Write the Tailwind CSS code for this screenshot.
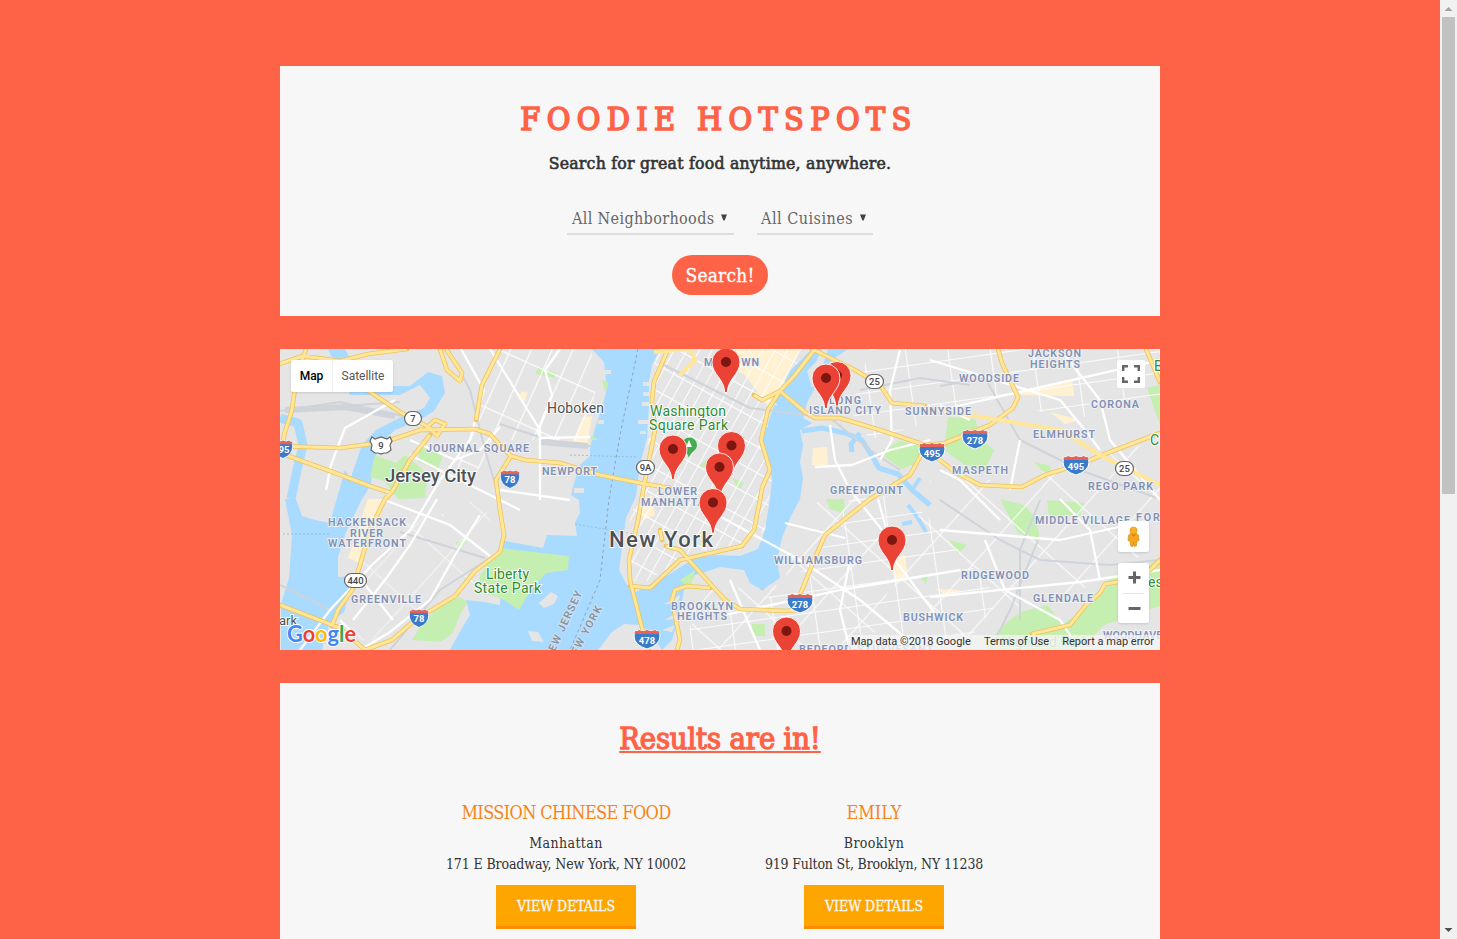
<!DOCTYPE html>
<html lang="en">
<head>
<meta charset="utf-8">
<title>Foodie Hotspots</title>
<script src="https://cdn.jsdelivr.net/npm/@tailwindcss/browser@4"></script>
</head>
<body class="flex h-screen overflow-hidden bg-[#ff6347] font-['Roboto_Slab','DejaVu_Serif_Condensed','DejaVu_Serif',serif] text-[#333]">
<main class="flex h-full flex-1 flex-col items-center gap-[33px] overflow-hidden pt-[66px]">

  <header class="flex h-[250px] w-[880px] shrink-0 flex-col items-center bg-[#f7f7f7] pt-8">
    <h1 class="h-[42px] pr-[2px] text-[32px] leading-[42px] tracking-[6.4px] whitespace-nowrap text-[#ff6347] [-webkit-text-stroke:1.7px_#ff6347]"><span>FOODIE HOTSPOTS</span></h1>
    <p class="mt-3 h-[22px] text-[17.5px] leading-[22px] tracking-[0.23px] whitespace-nowrap [-webkit-text-stroke:0.6px_#333]"><span>Search for great food anytime, anywhere.</span></p>
    <div class="mt-[29px] flex gap-[23px] text-base text-[#666]">
      <div class="flex h-8 w-[167px] items-end justify-between border-b-2 border-[#ddd] pr-[7px] pb-[2px] pl-[5px] whitespace-nowrap"><span class="tracking-[0.36px]">All Neighborhoods</span><svg class="mb-[10px] h-[7px] w-[6px]" viewBox="0 0 6 7"><path d="M0 0.500h6L3.600 6.500H2.400z" fill="#444"/></svg></div>
      <div class="flex h-8 w-[116px] items-end justify-between border-b-2 border-[#ddd] pr-[7px] pb-[2px] pl-1 whitespace-nowrap"><span class="tracking-[0.5px]">All Cuisines</span><svg class="mb-[10px] h-[7px] w-[6px]" viewBox="0 0 6 7"><path d="M0 0.500h6L3.600 6.500H2.400z" fill="#444"/></svg></div>
    </div>
    <button class="mt-5 h-10 w-24 rounded-[20px] bg-[#ff6347] pt-px text-[19px] tracking-[0.2px] whitespace-nowrap text-white [-webkit-text-stroke:0.3px_#fff]"><span>Search!</span></button>
  </header>

  <section class="relative h-[301px] w-[880px] shrink-0 overflow-hidden bg-[#e5e5e5] font-[Roboto,sans-serif]">
    <svg class="block" width="880" height="301" viewBox="280 349 880 301">
      <defs>
        <pattern id="g1" width="11" height="23" patternUnits="userSpaceOnUse" patternTransform="rotate(29)"><path d="M0 0V23M0 0H11" stroke="#fff" stroke-width="1.800" fill="none"/></pattern>
        <pattern id="g4" width="19" height="58" patternUnits="userSpaceOnUse" patternTransform="rotate(24)"><path d="M0 0V58M0 0H19" stroke="#fff" stroke-width="2.400" fill="none"/></pattern>
        <pattern id="g2" width="42" height="21" patternUnits="userSpaceOnUse" patternTransform="translate(8 4) rotate(-8)"><path d="M0 0V21M0 0H42" stroke="#fff" stroke-width="2.200" fill="none"/></pattern>
        <pattern id="g3" width="44" height="58" patternUnits="userSpaceOnUse" patternTransform="rotate(42)"><path d="M0 0V58M0 0H44" stroke="#fff" stroke-width="2.400" fill="none"/></pattern>
        <g id="pin"><path d="M-1.300 0C-1.600-14-14-18-14-30.500A14 14 0 0 1 14-30.500C14-18 1.600-14 1.300 0Z" fill="#ea4335" stroke="#fff" stroke-width=".9"/><circle cy="-30.500" r="5" fill="#7b1610"/></g>
        <g id="sh"><path d="M-12-8Q-10-7-8-9Q-4-7 0-9Q4-7 8-9Q10-7 12-8L13-3Q13 6 0 10Q-13 6-13-3Z" fill="#3a7ac8" stroke="#fff" stroke-width="1"/><path d="M-12-8Q-10-7-8-9Q-4-7 0-9Q4-7 8-9Q10-7 12-8L12.500-5H-12.500Z" fill="#e36359"/></g>
      </defs>
      <rect x="280" y="349" width="880" height="301" fill="#e5e5e5"/>
      <!-- water -->
      <g fill="#a9daff">
        <path d="M592 349L604 362L607 388L602 408L596 425L590 448L590 456L580 465L575 480L571 495L579 500L580 513L575 522L577 536L547 535L543 548L500 540L500 605L484 602L466 600L470 615L462 628L450 650H598L612 632L624 624L640 625L652 634L662 650L672 640L680 612L684 590L695 575L720 567L744 570L750 583L762 590L780 578L777 560L782 538L790 518L800 499L803 478L800 462L803 445L800 430L812 423L803 418L808 400L814 390L818 375L832 360L848 349H812L790 371L778 395L769 420L762 442L765 456L772 478L770 499L765 530L758 549L740 556L715 555L695 558L668 575L650 585L636 592L627 585L619 570L623 540L626 518L636 496L640 465L647 438L649 405L649 380L652 365L660 349Z"/>
        <path d="M285 499L292 535L289 578L281 604V650H322L330 622L344 612L350 589L355 576L338 577L338 557L346 532L362 499L345 470L335 505L330 523L315 520L302 516L296 499Z"/>
        <path d="M328 349H345L352 362L392 375L385 386H410L428 372L442 376L445 393L434 411L418 421L395 430L382 442L373 462L371 485L362 499L348 500L352 474L362 445L376 430L405 415L424 408L430 398L420 385L400 395H350Z"/>
      </g>
      <g fill="none" stroke="#a9daff" stroke-linejoin="round">
        <path stroke-width="9" d="M280 418L298 423L303 445L297 470L291 499"/><path stroke-width="5" d="M802 431L822 428L845 433L862 440L872 456L879 468L898 474L912 490L930 505M860 433L851 444L852 452"/><path stroke-width="4" d="M908 505L918 518L926 532M912 522L902 524M912 490L920 478M762 590L764 570L775 555"/>
      </g>
      <path d="M807 371L816 362L822 349H828L821 371L812 388Z" fill="#e5e5e5"/>
      <!-- parks -->
      <g fill="#c5eeb1">
        <path d="M500 548L569 556L568 570L546 573L530 591L519 610L504 600L478 590L480 575Z"/><path d="M441 604L460 597L467 602L460 615L452 634L440 642L412 640L422 624Z"/>
        <path d="M375 455L396 463L405 455L428 474L425 498L398 499L384 481L370 477Z"/><path d="M420 445L443 455L438 470L418 462Z"/><path d="M883 450L900 441L920 446L919 462L902 469L882 455Z"/><path d="M948 417L975 419L982 440L994 450L986 468L965 465L944 450Z"/><path d="M1000 499L1024 505L1036 518L1040 540L1018 533Z"/>
        <path d="M1000 628L1020 612L1048 605L1062 625L1090 605L1100 590L1115 575L1160 560V606L1104 625L1080 650H985Z"/><path d="M1147 388L1160 385V425Z"/><path d="M826 499H844L845 514L830 509ZM538 367L556 373L555 378L536 374ZM602 380L609 383L605 392ZM752 624H765V636H752ZM455 542L467 540L460 550ZM592 436L599 440H590ZM699 466L712 455L718 470ZM732 478L744 483L739 490ZM950 540L967 545L958 554ZM920 577L928 575L926 584ZM1047 500L1084 503L1080 516H1049ZM680 580L695 570L690 590ZM1034 462L1051 466L1048 477Z"/>
      </g>
      <g fill="#fff1d2"><path d="M368 499H386L374 534L359 563L348 558ZM583 417L592 416L588 440L590 446L572 443ZM522 391L528 393L525 401L518 399ZM720 349H800L771 410L745 375L715 360ZM813 448L827 447L828 467L812 465ZM995 397L1072 380L1074 396L1015 395ZM1050 412L1080 420L1065 424ZM890 560L905 555L908 578L895 580ZM935 589L960 590L950 597ZM640 500L652 495L655 515L643 520Z"/></g>
      <!-- street grids -->
      <path fill="url(#g1)" d="M660 349H812L790 371L762 442L772 478L765 530L740 550L700 550L640 585L627 575L630 520L642 480L650 430L652 370Z"/>
      <path fill="url(#g4)" opacity=".9" d="M500 349H590L600 375L582 440H500L440 520L470 430Z"/>
      <path fill="url(#g2)" opacity=".85" d="M760 600L790 590L850 499L905 495L950 540L1000 600L960 650H690L690 610ZM870 349H1160V400L1070 420L1000 400L870 440L850 410Z"/>
      <path fill="url(#g3)" opacity=".8" d="M790 520L850 480L900 550L870 650H790L690 650L695 590L785 585ZM930 480L1010 480L1160 440V540L1110 580L1010 610L950 650L890 600Z"/>
      <path fill="url(#g3)" opacity=".5" d="M370 530L480 499L500 540L470 590L400 640H350L360 580Z"/>
      <!-- railways -->
      <g fill="none" stroke="#cfd3da" stroke-width="2"><path d="M280 411L340 402L420 420M300 409L400 402M448 349L470 390L485 450L500 500M500 424L560 444L590 446M280 585L330 610M400 532L485 558M490 558L440 590L390 650M660 363L750 408L830 418L870 450L900 470M860 390L920 378L970 385M940 386L985 378L1020 440L1080 470L1160 499M940 500L1000 540L1040 560L1110 565L1160 560M1038 540L1010 610L990 650M1040 500L1020 550L1020 620"/><path stroke-width="6" d="M285 410L345 407L395 416M540 442L588 446"/></g>
      <g fill="none" stroke="#fff" stroke-width="2.300" stroke-linejoin="round">
        <path d="M461 349L484 390L478 410L470 440L440 480L410 530L372 565L330 610L300 650M395 400L345 428L331 465L326 490M382 499L450 525L490 556M500 427L480 450L455 460L410 440M437 499L410 545L385 580L353 620M480 515L455 555L430 600L390 632L360 650M355 572L393 620M490 349L540 430L540 500M410 455L520 510M340 620L355 635M560 349L545 370L552 395L538 432L540 438L590 437M500 490L570 500"/>
        <path d="M712 512L800 560L860 600L920 650M785 523L845 538M830 425L835 460L850 490L890 540M815 467L852 465L890 450L930 440M900 350L890 390L892 440L880 460M930 360L1060 400L1085 430L1100 450M1060 349L1100 400L1110 440L1160 500M940 410L1160 360M940 405L970 420M940 530L1060 540L1150 520M930 597L1080 582L1160 570M985 540L1005 590L1060 620L1080 650M1060 499L1090 530L1100 580M1000 520L960 480L940 470M1010 490L1020 440M725 615L840 590L960 570M730 580L760 650M850 560L840 610L850 650M878 499L895 560L940 620"/>
      </g>
      <path d="M638 349L621 430L609 499L600 580L570 650" fill="none" stroke="#8ea5b8" stroke-width="1" stroke-dasharray="3 3"/>
      <path d="M570 455L636 457M283 534H330M575 524L640 535" stroke="#92b8d0" stroke-width=".8" stroke-dasharray="2 2"/>
      <g fill="#e5e5e5"><path d="M649 382H643V386H649M649 392H643V396H649M650 402H642V406H650M648 420H638V424H648M646 431H640V434H646M605 370H611V374H605M604 420H598V424H604M578 470H586V474H578M574 488H584V493H574M680 595L664 604L678 604M678 612L665 620L677 619M675 625L662 630L672 632M539 603L551 592L558 596L554 604L544 608ZM528 631L538 632L544 642L532 641Z"/></g>
      <!-- highways -->
      <g id="major" fill="none" stroke="#eec35a" stroke-width="4.600" stroke-linejoin="round" stroke-linecap="round">
        <path id="hw1" d="M276 365L303 356L340 361L368 354L407 349M306 349L296 380L292 410L284 435L282 455M280 446L340 448L385 442L420 430L475 429L490 434L500 445L511 456L525 460L560 463L600 475L640 483L670 488M360 385L400 412L430 428L437 436L445 424L435 420L426 428M280 453L330 471L370 486L391 493M430 435L410 460L392 492L385 499L370 530L360 565L352 590L338 610L332 626M280 605L340 628L365 650M365 650L392 640L415 620L455 596L475 571L500 552L504 535L500 510L496 480L511 456M440 349L447 370L460 381L462 373L446 349M500 349L482 385L476 420M668 349L654 382L652 400L655 430L645 480L638 520L629 560L630 580L640 620L648 650M630 586L650 588L680 560L720 551L742 546L754 530L760 500L762 488L770 470L761 440L768 410L780 391M662 540L660 530M666 546L680 550L725 600L740 609L785 611M677 650L680 640L672 600L675 590L687 586L710 588M815 349L795 375L780 391L762 400L754 395M780 391L805 412L815 418L840 418L880 430L925 445L945 443L990 425L1013 408L1018 397L1002 363L998 349M812 349L855 370L880 385L892 403L925 406M925 448L910 475L870 499L825 535L812 565L800 595L797 610L785 611M930 452L955 472L980 485L1022 487L1045 475L1080 464L1110 452L1160 433M1032 634L1070 625L1086 605L1100 593L1105 584L1130 580L1150 570L1160 560M1146 349L1160 382"/>
      </g>
      <use href="#hw1" fill="none" stroke="#ffe699" stroke-width="3"/>
      <path d="M925 408L1000 420L1060 430L1100 455L1160 485M654 352L690 349L695 360L680 375" fill="none" stroke="#ffe699" stroke-width="4"/>
      <!-- place labels -->
      <g font-family="Roboto, sans-serif" font-size="10.700" font-weight="600" fill="#8090b2" stroke="#f1f2f5" stroke-width="1.800" paint-order="stroke">
        <text x="426" y="452" textLength="103">JOURNAL SQUARE</text><text x="542" y="475" textLength="55">NEWPORT</text><text x="328" y="526" textLength="78">HACKENSACK</text><text x="350" y="537" textLength="33">RIVER</text><text x="328" y="547" textLength="78">WATERFRONT</text><text x="351" y="603" textLength="70">GREENVILLE</text>
        <text x="658" y="495" textLength="39">LOWER</text><text x="641" y="506" textLength="72">MANHATTAN</text><text x="704" y="366" textLength="55">MIDTOWN</text><text x="671" y="610" textLength="62">BROOKLYN</text><text x="677" y="620" textLength="50">HEIGHTS</text><text x="829" y="404" textLength="32">LONG</text><text x="809" y="414" textLength="72">ISLAND CITY</text><text x="905" y="415" textLength="66">SUNNYSIDE</text><text x="959" y="382" textLength="60">WOODSIDE</text><text x="1028" y="357" textLength="53">JACKSON</text><text x="1030" y="368" textLength="50">HEIGHTS</text><text x="1091" y="408" textLength="48">CORONA</text><text x="1033" y="438" textLength="62">ELMHURST</text><text x="952" y="474" textLength="56">MASPETH</text><text x="1088" y="490" textLength="65">REGO PARK</text><text x="830" y="494" textLength="73">GREENPOINT</text><text x="1035" y="524" textLength="95">MIDDLE VILLAGE</text><text x="1136" y="521" textLength="62">FOREST H</text><text x="774" y="564" textLength="88">WILLIAMSBURG</text><text x="961" y="579" textLength="68">RIDGEWOOD</text><text x="1033" y="602" textLength="60">GLENDALE</text><text x="903" y="621" textLength="60">BUSHWICK</text><text x="799" y="653" textLength="134">BEDFORD-STUYVESANT</text><text x="1103" y="639" textLength="67">WOODHAVEN</text>
        <g fill="#8993a1" stroke="#cfe3f2"><text transform="translate(551 660) rotate(-65)" textLength="74">NEW JERSEY</text><text transform="translate(573 663) rotate(-62)" textLength="62">NEW YORK</text></g>
      </g>
      <g font-family="Roboto, sans-serif" stroke="#fff" stroke-width="1.800" paint-order="stroke" fill="#4d5156">
        <text x="385" y="482" font-size="18.500" font-weight="500" textLength="91">Jersey City</text><text x="609" y="547" font-size="22" font-weight="500" textLength="104">New York</text><text x="547" y="413" font-size="14" textLength="57">Hoboken</text><text x="279" y="625" font-size="13">ark</text>
        <g fill="#2e8b32" font-size="14"><text x="650" y="416" textLength="76">Washington</text><text x="649" y="430" textLength="79">Square Park</text><text x="486" y="579" textLength="43">Liberty</text><text x="474" y="593" textLength="67">State Park</text><text x="1154" y="371">Be</text><text x="1150" y="445">Citi</text><text x="1148" y="587">est</text><text x="1001" y="647" opacity=".5" textLength="88">Highland Park</text></g>
      </g>
      <!-- road shields -->
      <g font-family="Roboto, sans-serif" font-size="9.500" font-weight="700" text-anchor="middle" fill="#fff">
        <use href="#sh" transform="translate(283 449) scale(.75 .95)"/><text x="284" y="453">95</text><use href="#sh" transform="translate(510 479) scale(.75 .95)"/><text x="510" y="483">78</text><use href="#sh" transform="translate(419 618) scale(.75 .95)"/><text x="419" y="622">78</text><use href="#sh" x="647" y="639"/><text x="647" y="644">478</text><use href="#sh" x="800" y="603"/><text x="800" y="608">278</text><use href="#sh" x="932" y="452"/><text x="932" y="457">495</text><use href="#sh" x="975" y="439"/><text x="975" y="444">278</text><use href="#sh" x="1076" y="465"/><text x="1076" y="470">495</text>
      </g>
      <g fill="#fff" stroke="#656565" stroke-width="1.200"><rect x="404.500" y="411.500" width="17" height="14" rx="7"/><path d="M372 437L375 439L381 437L387 439L390 437L392 441L390 445L391 450L387 453H384L381 454L378 453H375L371 450L372 445L370 441Z"/><rect x="344.500" y="573.500" width="22" height="14" rx="7"/><rect x="636.500" y="460.500" width="18" height="14" rx="7"/><rect x="865.500" y="374.500" width="18" height="14" rx="7"/><rect x="1115.500" y="461.500" width="18" height="14" rx="7"/></g>
      <g font-family="Roboto, sans-serif" font-size="9.500" font-weight="500" text-anchor="middle" fill="#444"><text x="413" y="422">7</text><text x="381" y="449">9</text><text x="355.500" y="584">440</text><text x="645.500" y="471">9A</text><text x="874.500" y="385">25</text><text x="1124.500" y="472">25</text></g>
      <path d="M689 458C688 452 682 451 682 445A7.500 7.500 0 0 1 697 445C697 451 690 452 689 458Z" fill="#43ad50"/><path d="M689 440L692 447H686Z" fill="#fff"/>
      <!-- markers -->
      <use href="#pin" x="726" y="392.500"/><use href="#pin" x="837" y="406"/><use href="#pin" x="826" y="408.500"/><use href="#pin" x="731.500" y="476"/><use href="#pin" x="673" y="479.500"/><use href="#pin" x="719.500" y="497.500"/><use href="#pin" x="713" y="533"/><use href="#pin" x="892" y="570.500"/><use href="#pin" x="786.500" y="661.500"/>
      <g font-family="Lato, sans-serif" font-size="23" stroke="#fff" stroke-width="2" paint-order="stroke"><text x="287" y="642" textLength="69" lengthAdjust="spacingAndGlyphs" font-weight="700"><tspan fill="#4285f4">G</tspan><tspan fill="#ea4335">o</tspan><tspan fill="#fbbc05">o</tspan><tspan fill="#4285f4">g</tspan><tspan fill="#34a853">l</tspan><tspan fill="#ea4335">e</tspan></text></g>
    </svg>
    <div class="absolute top-[11px] left-[11px] flex h-8 w-[102px] rounded-xs bg-white text-xs leading-8 shadow-sm"><span class="w-[42px] border-r border-[#eee] text-center font-medium text-black">Map</span><span class="flex-1 text-center text-[#565656]">Satellite</span></div>
    <div class="absolute top-[11px] left-[837px] flex size-[28px] items-center justify-center rounded-xs bg-white"><svg width="18" height="18" fill="none" stroke="#666" stroke-width="2.400"><path d="M1.200 6V1.200H6M12 1.200h4.800V6M16.800 12v4.800H12M6 16.800H1.200V12"/></svg></div>
    <div class="absolute top-[172px] left-[838px] flex size-[31px] items-center justify-center rounded-xs bg-white shadow-sm"><svg width="13" height="22" viewBox="0 0 14 24"><path d="M4 8L1.500 10L1 16H3L4 22H6.500L7 18L7.500 22H10L11 16H13L12.500 10L10 8Z" fill="#f5a71b" stroke="#c98b2a" stroke-width=".7"/><circle cx="7" cy="5" r="3.900" fill="#f9b122" stroke="#d89525" stroke-width=".7"/><path d="M4.500 9H9.500L7 12Z" fill="#e57b20"/></svg></div>
    <div class="absolute top-[214px] left-[838px] flex h-[60px] w-[31px] flex-col items-center rounded-xs bg-white shadow-sm"><svg width="31" height="60"><path d="M10.500 14.500h12M16.500 8.500v12M10.500 45.500h12" stroke="#666" stroke-width="3"/><path d="M5 30.500h21" stroke="#e6e6e6"/></svg></div>
    <div class="absolute right-0 bottom-0 flex h-[15px] w-[312px] justify-between bg-[#f5f5f5]/75 pr-[6px] pl-[3px] text-[11px] leading-[14px] whitespace-nowrap text-[#333]"><span>Map data ©2018 Google</span><span>Terms of Use</span><span>Report a map error</span></div>
  </section>

  <section class="flex h-[300px] w-[880px] shrink-0 flex-col items-center bg-[#f7f7f7] pt-[35px]">
    <h2 class="h-11 text-[30.5px] leading-[42px] tracking-[-0.1px] whitespace-nowrap text-[#ff6347] underline decoration-2 underline-offset-[2px] [-webkit-text-stroke:1.3px_#ff6347]"><span>Results are in!</span></h2>
    <div class="mt-[39px] grid grid-cols-[308px_308px] text-center text-sm leading-[21px] whitespace-nowrap">
      <article class="flex flex-col items-center"><h3 class="h-[32px] text-[18px] leading-6 tracking-[-0.62px] text-[#f5841a]"><span>MISSION CHINESE FOOD</span></h3><p class="tracking-[0.4px]"><span>Manhattan</span></p><p class="tracking-[-0.12px]"><span>171 E Broadway, New York, NY 10002</span></p><a class="mt-[10px] h-11 w-[140px] border-b-3 border-[#ff8c00] bg-[#ffa500] pt-px leading-[41px] text-[#f7f7f7] [-webkit-text-stroke:0.3px_#f7f7f7]"><span>VIEW DETAILS</span></a></article>
      <article class="flex flex-col items-center"><h3 class="h-[32px] text-[18px] leading-6 text-[#f5841a]"><span>EMILY</span></h3><p class="tracking-[0.4px]"><span>Brooklyn</span></p><p class="tracking-[-0.18px]"><span>919 Fulton St, Brooklyn, NY 11238</span></p><a class="mt-[10px] h-11 w-[140px] border-b-3 border-[#ff8c00] bg-[#ffa500] pt-px leading-[41px] text-[#f7f7f7] [-webkit-text-stroke:0.3px_#f7f7f7]"><span>VIEW DETAILS</span></a></article>
    </div>
  </section>
</main>
<aside class="flex w-[17px] flex-col items-center justify-between bg-[#f1f1f1]">
  <svg width="17" height="494"><path d="M4.500 11L8.500 7L12.500 11Z" fill="#a3a3a3"/><rect x="2" y="17" width="13" height="477" fill="#c1c1c1"/></svg>
  <svg width="17" height="17"><path d="M4.500 6L8.500 10L12.500 6Z" fill="#505050"/></svg>
</aside>
</body>
</html>
